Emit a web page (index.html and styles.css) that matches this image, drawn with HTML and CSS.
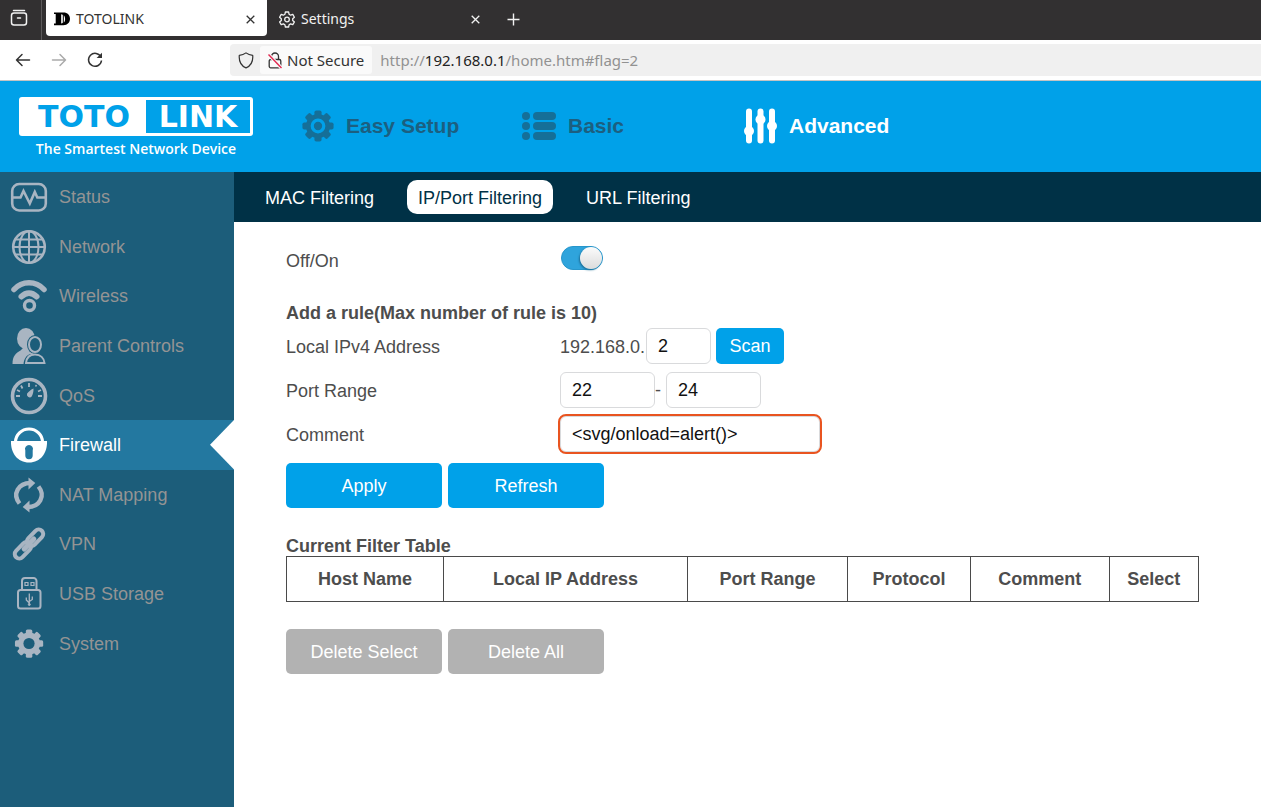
FILE: index.html
```html
<!DOCTYPE html>
<html lang="en">
<head>
<meta charset="utf-8">
<title>TOTOLINK</title>
<meta name="viewport" content="width=device-width, initial-scale=1">
<link rel="stylesheet" href="styles.css">
</head>
<body>
<svg class="defs" aria-hidden="true">
  <symbol id="tooth" viewBox="0 0 36 36">
    <circle cx="18" cy="18" r="13.6"/>
    <g>
      <rect x="14" y="0.500" width="8" height="35" rx="2"/>
      <rect x="14" y="0.500" width="8" height="35" rx="2" transform="rotate(45 18 18)"/>
      <rect x="14" y="0.500" width="8" height="35" rx="2" transform="rotate(90 18 18)"/>
      <rect x="14" y="0.500" width="8" height="35" rx="2" transform="rotate(135 18 18)"/>
    </g>
  </symbol>
</svg>

<div class="tabstrip">
  <button class="tabs-menu" aria-label="View tabs">
    <svg width="18" height="18" viewBox="0 0 18 18" fill="none" stroke="currentColor" stroke-width="1.500" stroke-linecap="round"><path d="M3.500 1.500h11"/><rect x="1.500" y="4" width="15" height="12" rx="2.500"/><path d="M7.500 9h3"/></svg>
  </button>
  <div class="tab tab-active">
    <svg width="16" height="14" viewBox="0 0 16 14" fill="#000"><path fill-rule="evenodd" d="M0 0.500h9.500c4 0 6.500 2.600 6.500 6.300s-2.500 6.400-6.500 6.400H0v-1.600h1.700V2H0zM7.200 2.200v9.400c.8 0 1.300-.3 1.600-.8V3c-.3-.5-.8-.8-1.600-.8zM9.800 3.200v7.400c.9-1 1.300-2.200 1.300-3.700s-.4-2.700-1.300-3.700z"/></svg>
    <span class="tab-title">TOTOLINK</span>
    <button class="tab-close" aria-label="Close tab"><svg width="9" height="9" viewBox="0 0 9 9" stroke="currentColor" stroke-width="1.300"><path d="M.7.7l7.600 7.600M8.300.7L.7 8.300"/></svg></button>
  </div>
  <div class="tab tab-next">
    <svg width="16" height="17" viewBox="0 0 16 17" fill="none" stroke="currentColor" stroke-width="1.300" stroke-linejoin="round"><path d="M6.400 1h3.200l.5 2.300 1.500.9 2.200-.8 1.600 2.800-1.700 1.500v1.700l1.700 1.500-1.600 2.800-2.200-.8-1.500.9-.5 2.200H6.400l-.5-2.200-1.500-.9-2.200.8-1.600-2.800 1.700-1.500V7.700L.6 6.200l1.600-2.800 2.200.8 1.500-.9z"/><circle cx="8" cy="8.500" r="2.300"/></svg>
    <span class="tab-title">Settings</span>
    <button class="tab-close" aria-label="Close tab"><svg width="9" height="9" viewBox="0 0 9 9" stroke="currentColor" stroke-width="1.300"><path d="M.7.7l7.600 7.600M8.300.7L.7 8.300"/></svg></button>
  </div>
  <button class="tab-new" aria-label="New tab"><svg width="13" height="13" viewBox="0 0 13 13" stroke="currentColor" stroke-width="1.400"><path d="M6.500.5v12M.5 6.500h12"/></svg></button>
</div>

<div class="toolbar">
  <div class="nav-buttons">
    <button aria-label="Back"><svg width="16" height="14" viewBox="0 0 16 14" fill="none" stroke="currentColor" stroke-width="1.500" stroke-linecap="round" stroke-linejoin="round"><path d="M14.500 7H1.500M7 1.500L1.500 7 7 12.500"/></svg></button>
    <button aria-label="Forward" disabled><svg width="16" height="14" viewBox="0 0 16 14" fill="none" stroke="currentColor" stroke-width="1.500" stroke-linecap="round" stroke-linejoin="round"><path d="M1.500 7h13M9 1.500L14.500 7 9 12.500"/></svg></button>
    <button aria-label="Reload"><svg width="16" height="16" viewBox="0 0 16 16" fill="none" stroke="currentColor" stroke-width="1.500"><path d="M13.900 5A6.500 6.500 0 1 0 14.500 8.500"/><path d="M15 .8v5.200H9.600z" fill="currentColor" stroke="none"/></svg></button>
  </div>
  <div class="address">
    <svg class="shield" width="16" height="17" viewBox="0 0 16 17" fill="none" stroke="currentColor" stroke-width="1.200" stroke-linejoin="round"><path d="M8 .9c1.800 1.400 4 2.200 6.700 2.400.5 5.500-1.200 10.200-6.700 12.600C2.500 13.500.8 8.800 1.300 3.300 4 3.100 6.200 2.300 8 .9z"/></svg>
    <button class="security">
      <svg width="14" height="17" viewBox="0 0 14 17" fill="none" stroke="currentColor" stroke-width="1.300"><path d="M3.500 8V4.500a3.500 3.500 0 0 1 7 0V8"/><rect x="1.200" y="7.500" width="11.600" height="8.300" rx="1.500"/><path d="M.5 2.500l13 13.500" stroke="#fafafa" stroke-width="3.500"/><path d="M.5 2.500l13 13.500" stroke="#e22850" stroke-width="1.400"/></svg>
      <span>Not Secure</span>
    </button>
    <div class="url" role="textbox" aria-label="Address">http://<span class="host">192.168.0.1</span>/home.htm#flag=2</div>
  </div>
</div>

<header class="header">
  <a class="logo" href="#">
    <span class="logo-mark"><span class="logo-toto">TOTO</span><span class="logo-link">LINK</span></span>
    <span class="logo-tag">The Smartest Network Device</span>
  </a>
  <nav class="modes">
    <a class="mode" href="#"><svg width="32" height="32" viewBox="0 0 36 36"><use href="#tooth"/><circle cx="18" cy="18" r="6.500" fill="none" stroke="#00a1e9" stroke-width="3.600"/></svg>Easy Setup</a>
    <a class="mode" href="#"><svg width="34" height="28" viewBox="0 0 34 28"><circle cx="4" cy="4" r="4"/><circle cx="4" cy="14" r="4"/><circle cx="4" cy="24" r="4"/><rect x="11" width="23" height="8" rx="4"/><rect x="11" y="10" width="23" height="8" rx="4"/><rect x="11" y="20" width="23" height="8" rx="4"/></svg>Basic</a>
    <a class="mode mode-active" href="#"><svg width="33" height="36" viewBox="0 0 33 36"><rect x="2" y="0.500" width="6" height="35" rx="3"/><circle cx="5" cy="23" r="5"/><rect x="13.500" y="0.500" width="6" height="35" rx="3"/><circle cx="16.500" cy="11.500" r="5"/><rect x="25" y="0.500" width="6" height="35" rx="3"/><circle cx="28" cy="18" r="5"/></svg>Advanced</a>
  </nav>
</header>

<div class="layout">
  <nav class="sidebar">
    <ul class="menu">
      <li><a href="#"><svg viewBox="0 0 38 38" fill="none" stroke="currentColor" stroke-width="2.600"><rect x="2.200" y="6" width="33.600" height="26.500" rx="7"/><path d="M2 19.500h8.500l3-6.500 6.300 12.500 5-11.500 2.500 5.500H36" stroke-width="2.600"/></svg>Status</a></li>
      <li><a href="#"><svg viewBox="0 0 38 38" fill="none" stroke="currentColor" stroke-width="2"><circle cx="19" cy="19" r="15.800" stroke-width="2.600"/><ellipse cx="19" cy="19" rx="9.500" ry="15.800"/><path d="M19 3v32M3 19h32M6 11.500h26M6 26.500h26"/></svg>Network</a></li>
      <li><a href="#"><svg viewBox="0 0 38 38" fill="none" stroke="currentColor" stroke-linecap="round"><path d="M4 12.500C12 3.500 26 3.500 34 12.500" stroke-width="5.500"/><path d="M11.500 19.500c4.500-4.500 10.500-4.500 15 0" stroke-width="6"/><circle cx="19.500" cy="28.500" r="5" stroke-width="3.400"/></svg>Wireless</a></li>
      <li><a href="#"><svg viewBox="0 0 38 38" fill="currentColor"><ellipse cx="16" cy="11.500" rx="9" ry="10.500"/><path d="M2.500 37c0-8 3.500-11 8-13.500l3-3h7l3 4V37z"/><ellipse cx="25" cy="17.500" rx="8" ry="9.500" fill="#1c5d7a"/><path d="M13.500 38c0-6 3-10 7-11l9 0c4 1 8 5 8 11z" fill="#1c5d7a"/><g fill="none" stroke="currentColor" stroke-width="2"><ellipse cx="25" cy="17.500" rx="6" ry="7.500"/><path d="M16 36c.5-5 3.500-8.500 9-8.500s9 3.500 9.500 8.500z"/></g></svg>Parent Controls</a></li>
      <li><a href="#"><svg viewBox="0 0 38 38" fill="none" stroke="currentColor"><circle cx="19" cy="19" r="16.500" stroke-width="3.600"/><path d="M19 6v4M11 8.500l1.500 3M7 13l3 1.500M6 19h4M28 19h4" stroke-width="1.800"/><path d="M28 14.500l3-1.500M25.500 9.500l1-1.500" stroke-width="1.400"/><path d="M23.500 11.500c.2 3.500-.8 6-1.800 8a2.800 2.800 0 0 1-4.700-2.700c1.500-2 3.500-4 6.500-5.300z" fill="currentColor" stroke="none"/></svg>QoS</a></li>
      <li><a class="current" href="#" aria-current="page"><svg viewBox="0 0 38 38" fill="currentColor"><path d="M5.500 16a13.500 13 0 0 1 27 0" fill="none" stroke="currentColor" stroke-width="3.200"/><path d="M1 15h36c.5 12-6.500 21.500-18 21.500S.5 27 1 15z"/><path d="M19 19a4 4 0 0 1 3.700 5.500v5a3.700 3.700 0 0 1-7.400 0v-5A4 4 0 0 1 19 19z" fill="#2378a0"/></svg>Firewall</a></li>
      <li><a href="#"><svg viewBox="0 0 38 38" fill="none" stroke="currentColor" stroke-width="4.400"><path d="M9.500 27.500C2 18 8.500 7 20.500 7M28.500 10.500C36 20 29.500 31 17.500 31"/><path d="M18.500 1.500l6.800 5.500-6.800 6.500zM19.500 24.500l-6.800 6.500 6.800 5.500z" fill="currentColor" stroke="none"/></svg>NAT Mapping</a></li>
      <li><a href="#"><svg viewBox="0 0 38 38" fill="none" stroke="currentColor" stroke-width="4"><g transform="rotate(-46 19 19)"><rect x="0.500" y="14.500" width="19.500" height="9" rx="4.500"/><rect x="18" y="14.500" width="19.500" height="9" rx="4.500"/><path d="M12 19h14" stroke-width="5" stroke-linecap="round"/></g></svg>VPN</a></li>
      <li><a href="#"><svg viewBox="0 0 38 38" fill="none" stroke="currentColor" stroke-width="2"><path d="M12 14.500V6a3 3 0 0 1 3-3h8.500a3 3 0 0 1 3 3v8.500"/><rect x="8" y="15" width="22.500" height="18.500" rx="2.500"/><path d="M15 7.500h3v3h-3zM21 7.500h3v3h-3z" stroke-width="1.200"/><path d="M19.300 18.500v11M19.300 28l-3-3v-2.500M19.300 26.500l3-2v-3" stroke-width="1.300"/><circle cx="19.300" cy="29.500" r="1" fill="currentColor" stroke-width="1"/></svg>USB Storage</a></li>
      <li><a href="#"><svg viewBox="0 0 38 38" fill="none"><g fill="currentColor" transform="translate(4.500 4) scale(.81)"><use href="#tooth" width="36" height="36"/></g><circle cx="19" cy="18.500" r="5.600" fill="#1c5d7a"/></svg>System</a></li>
    </ul>
  </nav>

  <main class="main">
    <nav class="subnav">
      <a href="#">MAC Filtering</a>
      <a class="selected" href="#">IP/Port Filtering</a>
      <a href="#">URL Filtering</a>
    </nav>
    <form class="content">
      <div class="row row-switch">
        <label for="enable">Off/On</label>
        <input class="switch" id="enable" type="checkbox" role="switch" checked>
      </div>
      <h2>Add a rule(Max number of rule is 10)</h2>
      <div class="row">
        <label for="ip">Local IPv4 Address</label>
        <div class="field"><span class="prefix">192.168.0.</span><input class="box box-octet" id="ip" type="text" value="2"><button class="scan" type="button">Scan</button></div>
      </div>
      <div class="row">
        <label for="port-from">Port Range</label>
        <div class="field"><input class="box box-port" id="port-from" type="text" value="22"><span class="dash">-</span><input class="box box-port" type="text" value="24" aria-label="Port range end"></div>
      </div>
      <div class="row">
        <label for="comment">Comment</label>
        <div class="field"><input class="box box-comment focused" id="comment" type="text" value="&lt;svg/onload=alert()&gt;"></div>
      </div>
      <div class="actions">
        <button class="btn" type="button">Apply</button>
        <button class="btn" type="button">Refresh</button>
      </div>
      <table class="rules">
        <caption>Current Filter Table</caption>
        <colgroup><col class="c-host"><col class="c-ip"><col class="c-port"><col class="c-proto"><col class="c-comment"><col class="c-select"></colgroup>
        <thead><tr><th>Host Name</th><th>Local IP Address</th><th>Port Range</th><th>Protocol</th><th>Comment</th><th>Select</th></tr></thead>
      </table>
      <div class="actions actions-delete">
        <button class="btn btn-off" type="button" disabled>Delete Select</button>
        <button class="btn btn-off" type="button" disabled>Delete All</button>
      </div>
    </form>
  </main>
</div>
</body>
</html>
```

FILE: styles.css
```css
* { box-sizing: border-box; }

body {
  margin: 0;
  min-height: 100vh;
  display: flex;
  flex-direction: column;
  font: 18px/22px "Liberation Sans", Arial, sans-serif;
  color: #4d4d4d;
  background: #fff;
}

button, input { font: inherit; color: inherit; margin: 0; }
button { padding: 0; border: 0; background: none; }
a { color: inherit; text-decoration: none; }
svg { display: block; flex: none; }
.defs { position: absolute; width: 0; height: 0; }

/* Browser tabs and toolbar */
.tabstrip, .toolbar {
  display: flex;
  align-items: center;
  height: 40px;
  font: 14px/20px "Noto Sans", sans-serif;
}
.tabstrip { background: #323031; color: #f2f2f2; align-items: stretch; }
.tabs-menu {
  display: flex;
  align-items: center;
  justify-content: center;
  width: 42px;
  padding-bottom: 4px;
  padding-right: 4px;
  border-right: 1px solid #5c5a5b;
}
.tab {
  display: flex;
  align-items: center;
  gap: 6px;
  width: 221px;
  margin-bottom: 4px;
  padding: 2px 12px 0 12px;
}
.tab-active {
  margin-left: 4px;
  padding-left: 8px;
  border-radius: 0 0 4px 4px;
  background: #fff;
  color: #333;
}
.tab-next { width: 225px; }
.tab-title { flex: 1; }
.tab-new { margin: 0 0 2px 11px; padding: 0 4px; }

.toolbar { height: 41px; border-bottom: 1px solid #c4c4c4; color: #333; background: #fff; }
.nav-buttons { display: flex; gap: 20px; width: 230px; padding-left: 15px; }
.nav-buttons button { display: flex; align-items: center; height: 20px; }
.nav-buttons button:disabled { color: #aaa; }
.address {
  flex: 1;
  display: flex;
  align-items: center;
  height: 32px;
  padding-left: 8px;
  border-radius: 4px 0 0 4px;
  background: #f0f0f0;
}
.security {
  display: flex;
  align-items: center;
  gap: 5px;
  height: 28px;
  margin: 0 8px 0 6px;
  padding: 0 8px;
  border-radius: 3px;
  background: #fafafa;
}
.security, .url { font-size: 15px; }
.url { color: #929292; }
.host { color: #222; }

/* Header */
.header {
  display: flex;
  align-items: flex-start;
  height: 91px;
  padding: 16px 0 0 19px;
  background: #00a1e9;
}
.logo { width: 234px; color: #fff; }
.logo-mark {
  display: flex;
  align-items: stretch;
  height: 39px;
  padding: 3px;
  border-radius: 3px;
  background: #fff;
  font: bold 30px/33px "DejaVu Sans", sans-serif;
}
.logo-toto { flex: 1; text-align: center; color: #00a1e9; }
.logo-link { width: 104px; text-align: center; background: #00a1e9; }
.logo-tag {
  display: block;
  text-align: center;
  font: 600 14px/26px "Open Sans", sans-serif;
  white-space: nowrap;
}
.modes {
  display: grid;
  grid-template-columns: 220px 222px auto;
  align-items: center;
  min-height: 58px;
  margin-left: 49px;
  font-size: 21px;
  font-weight: bold;
}
.mode { display: flex; align-items: center; gap: 12px; color: #1c5f80; fill: #156f98; }
.mode-active { color: #fff; fill: #fff; }

/* Side menu */
.layout { flex: 1; display: flex; }
.sidebar { width: 234px; flex: none; background: #1c5d7a; }
.menu {
  display: grid;
  grid-auto-rows: 1fr;
  height: 496px;
  margin: 0;
  padding: 0;
  list-style: none;
}
.menu a {
  display: flex;
  align-items: center;
  gap: 11px;
  height: 100%;
  padding-left: 10px;
  padding-top: 1px;
  color: #949494;
}
.menu svg { width: 38px; height: 38px; color: #a9b5c2; }
.menu .current { position: relative; background: #2378a0; color: #fff; }
.menu .current svg { color: #fff; }
.menu .current::after {
  content: "";
  position: absolute;
  top: 0;
  right: 0;
  bottom: 0;
  width: 24px;
  background: #fff;
  clip-path: polygon(100% 0, 0 50%, 100% 100%);
}

/* Page */
.main { flex: 1; min-width: 0; }
.subnav {
  display: flex;
  align-items: center;
  gap: 22px;
  height: 50px;
  padding: 0 20px;
  background: #003146;
  color: #fff;
}
.subnav a { padding: 7px 11px 5px; border-radius: 10px; }
.subnav .selected { background: #fff; color: #003146; }

.content { padding: 14px 62px 0 52px; }
.row { display: grid; grid-template-columns: 274px 1fr; align-items: center; min-height: 44px; }
.row label, .prefix { padding-top: 2px; }
.row-switch { margin-bottom: 20px; padding-top: 2px; min-height: 46px; }
.content h2 { margin: 0; padding-top: 1px; font-size: 18px; line-height: 21px; }
.field { display: flex; align-items: center; }
.prefix { min-width: 86px; }
.box {
  height: 36px;
  padding: 1px 11px 0;
  border: 1px solid #d9dadc;
  border-radius: 6px;
  background: #fff;
  color: #111;
}
.box:focus { outline: 2px solid #e95420; }
.box-octet { width: 65px; margin-right: 5px; }
.box-port { width: 95px; }
.box-comment { width: 260px; }
.focused { outline: 2px solid #e95420; }
.dash { width: 11px; }
.scan { width: 68px; height: 36px; border-radius: 5px; background: #00a1e9; color: #fff; }

.switch {
  appearance: none;
  display: flex;
  justify-content: flex-end;
  width: 42px;
  height: 24px;
  margin: 0 0 5px 1px;
  border: 1px solid #2796cb;
  border-radius: 12px;
  background: #2fa4dc;
}
.switch::before {
  content: "";
  width: 22px;
  height: 22px;
  border-radius: 50%;
  background: linear-gradient(#fbfbfb, #dcdcdc);
  box-shadow: -1px 1px 2px #1c6c95;
}
.switch:not(:checked) { justify-content: flex-start; background: #bbb; border-color: #aaa; }

.actions { display: flex; gap: 6px; margin-top: 7px; }
.btn { width: 156px; height: 45px; border-radius: 5px; background: #00a1e9; color: #fff; }
.btn-off { background: #b2b2b2; }

.rules { width: 100%; margin-top: 28px; border-collapse: collapse; table-layout: fixed; }
.rules caption { text-align: left; font-weight: bold; line-height: 20px; }
.rules th { height: 45px; padding: 0; border: 1px solid #4a4a4a; }
.c-host { width: 17.200%; }
.c-ip { width: 26.800%; }
.c-port { width: 17.500%; }
.c-proto { width: 13.500%; }
.c-comment { width: 15.200%; }
.c-select { width: 9.800%; }
.actions-delete { margin-top: 27px; }
```
